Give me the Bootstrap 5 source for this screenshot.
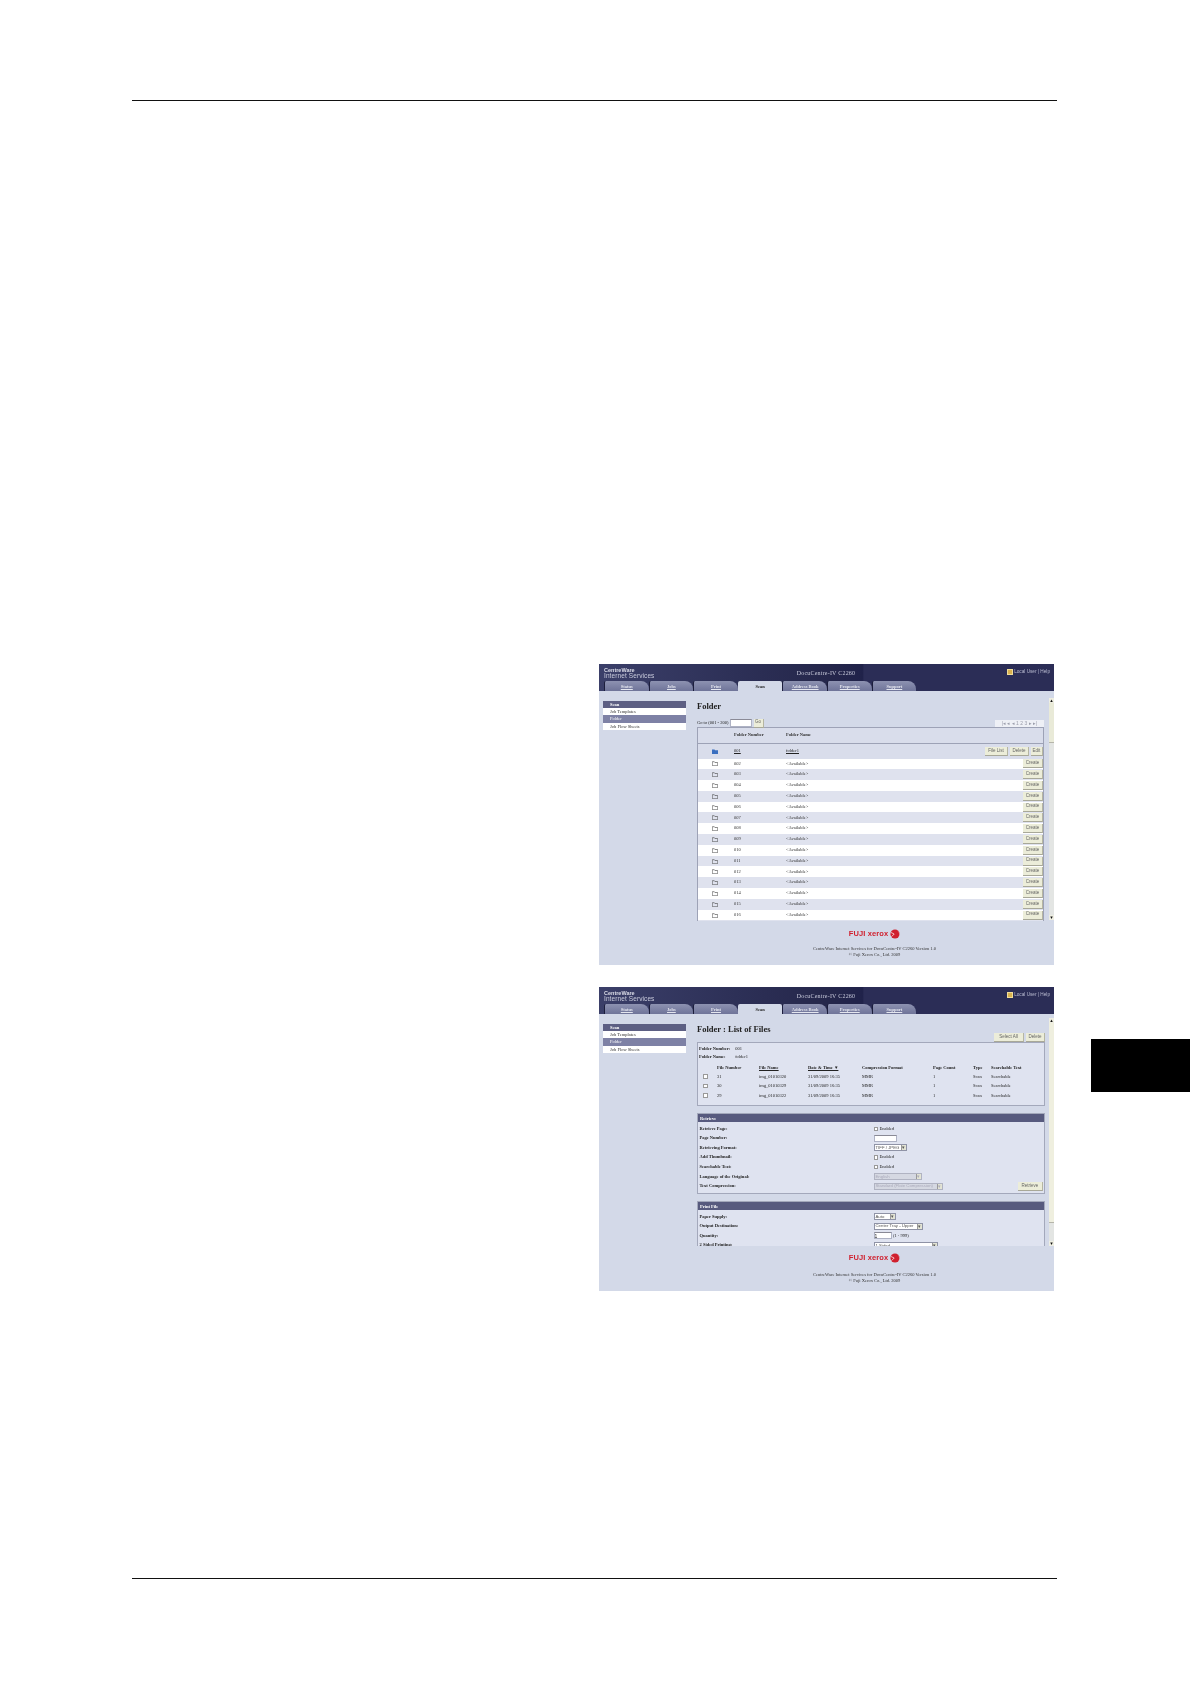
<!DOCTYPE html>
<html lang="en">
<head>
<meta charset="utf-8">
<title>Folder</title>
<link href="https://cdn.jsdelivr.net/npm/bootstrap@5.3.0/dist/css/bootstrap.min.css" rel="stylesheet">
<style>
html,body{margin:0;background:#fff}
.sheet{width:1190px;height:1684px;padding:100px 0 0 132px;overflow:hidden}
.mainc{width:925px;height:1479px;border-top:1.5px solid #111;border-bottom:1.5px solid #111;padding:563px 0 0 467px}
.thumbtab{width:99px;height:53px;margin:939px 0 0 34px;background:#000}
.shot{width:455px;font-family:"Liberation Serif",serif;font-size:4.5px;line-height:1;color:#222;background:#d3d9e8;filter:blur(.35px);overflow:hidden}
.shot1{height:301px}
.shot2{height:304px;margin-top:22px}
.mast{height:27px;background:linear-gradient(90deg,#3b3f69 0,#2d3057 30%,#25274b 50%,#20224a 58%,#2b2d56 58.2%,#2b2d56 100%);color:#e8e9f2;padding:0 4px 0 5px}
.mrow{height:17px}
.brandb{width:136px;flex:none}
.brand1{font:bold 5.5px/5px "Liberation Sans",sans-serif;margin-top:4px;color:#dcdde8}
.brand2{font:6.5px/6px "Liberation Sans",sans-serif;color:#c9cbdc;letter-spacing:.1px}
.model{font:6px/6px "Liberation Serif",serif;color:#c9cbdc;width:172px;margin-top:6px;letter-spacing:.2px;flex:none}
.who{font:4.7px/5px "Liberation Sans",sans-serif;color:#b9bbd0;margin-top:5px;margin-left:auto;gap:1px}
.who i{display:block;width:6px;height:6px;background:#d9b24f;border:1px solid #f0dd9a}
.nav-tabs.mtabs{height:10px;border:0;flex-wrap:nowrap;gap:0;margin-left:0}
.mtabs .nav-link{width:44.6px;height:10px;padding:2.5px 0 0;margin:0;border:0;border-left:1px solid #1c1e3c;border-radius:2px 8px 0 0;background:linear-gradient(#8d92b1,#6f7499);color:#e4e6ef;font:bold 4.5px/5px "Liberation Serif",serif;text-align:center;text-decoration:underline}
.mtabs .nav-link.active{background:#d3d9e8;color:#222;text-decoration:none;border:0;border-radius:2px 2px 0 0}
.mid{min-height:0}
.sidebar{width:98px;padding:10px 11px 0 4px;flex:none}
.list-group.snav{border-radius:0;width:83px;--bs-list-group-border-width:0}
.snav .list-group-item{height:7.2px;padding:1px 0 0 7px;font-size:4.5px;line-height:5px;border:0;border-radius:0;background:#fff;color:#333}
.snav .list-group-item.lead-i{background:#5d5f83;color:#fff;font-weight:700}
.snav .list-group-item.sel-i{background:#7e81a5;color:#fff}
.content{min-width:0;overflow:hidden;flex:1}
.c1{padding-top:10px;height:230px}
.c2{padding-top:10px;height:232px}
.ttl{font:bold 8.5px/11px "Liberation Serif",serif;color:#222;margin:0}
.goline{height:8px;margin-top:7px;width:347px}
.goin{margin:0 2px 0 1px}
.fld{display:inline-block;background:#fff;border:1px solid #aeb2c4;border-top-color:#8a8a96}
.fld1{width:22px;height:8px}
.pager{width:49px;height:7px;background:#eef0f6;font:5px/7px "Liberation Sans",sans-serif;color:#9a9caa;text-align:center}
.btn.pbtn{--bs-btn-padding-x:0;--bs-btn-padding-y:0;--bs-btn-font-size:4.5px;--bs-btn-border-radius:0;--bs-btn-line-height:1;height:9px;font-family:"Liberation Sans",sans-serif;color:#666;background:#ecedd9;border:0;border-right:1px solid #b5b5a2;border-bottom:1px solid #a8a898}
.w10{width:10px}.w20{width:20px}.w12{width:12px}.w19{width:19px}.w23{width:23px}.w30{width:30px}.w25{width:25px}
.tbox{width:347px;height:194px;border:1px solid #9da2b6;border-bottom:0;background:#dfe2ee;overflow:hidden}
.table.ftable{width:345px;margin:0;table-layout:fixed;font-size:4.5px;--bs-table-bg:transparent;--bs-table-color:#333;--bs-table-border-color:transparent}
.ftable td,.ftable th{padding:0;border:0;height:10.8px;vertical-align:middle;font-weight:400;background:transparent;box-shadow:none;line-height:1}
.ftable .colicon{width:36px}.ftable .colnum{width:52px}.ftable .colact{width:80px}
.ftable thead th{height:15.5px;font-weight:700;background:#d9ddeb;border-bottom:1px solid #9da2b6}
.ftable .firstr td{height:15px;background:#d9ddeb}
.ftable .wr td{background:#fff}
.ftable .gr td{background:#dfe2ee}
.ftable a{color:#222}
.ico{display:block;width:6px;height:5px;margin-left:14px}
.acts{gap:2px}
.scrollb{width:5px;flex:none;background:#e3e5e3;display:flex;flex-direction:column}
.scrollb::before,.scrollb::after{content:"▴";display:block;height:5px;flex:none;font:5px/5px "DejaVu Sans",sans-serif;color:#111;text-align:center;background:#eeeee2}
.scrollb::after{content:"▾";margin-top:auto}
.thumb1{height:40px;background:#e9ead8;border-bottom:1px solid #b5b5aa}
.thumb2{height:200px;background:#efefdf;border-bottom:1px solid #b5b5aa}
.sb1{height:222px;margin:7px 0 0 4px}
.sb2{height:228px;margin:4px 0 0 4px}
.foot{text-align:center;color:#333;font-size:4.5px;line-height:6px;padding-left:96px}
.foot1{height:44px;padding-top:7.5px}
.foot2{height:45px;padding-top:6px}
.fx{display:flex;justify-content:center;align-items:center;gap:2px;height:11px;margin-bottom:6.5px}
.foot2 .fx{margin-bottom:9px}
.fxt{font:bold 7.5px/10px "Liberation Sans",sans-serif;color:#d0202e;letter-spacing:.1px}
.fbtns{gap:2px;width:348px;margin-top:-2px;height:9px}
.lbox{width:348px;height:64px;border:1px solid #a3a8bb;background:#dfe3f0;padding-top:2px}
.inf{padding-left:1px;font-size:4.5px;height:8px;line-height:7px;white-space:nowrap}
.inf b{display:inline-block;width:35px}
.flist{width:346px;margin-top:3px;font-size:4.5px}
.frow{display:grid;grid-template-columns:19px 42px 49px 54px 71px 40px 18px 1fr;height:9.5px;align-items:center;white-space:nowrap}
.frow.fh{font-weight:700;height:8px}
.frow.fh .ul{text-decoration:underline}
.cb{display:inline-block;width:4.5px;height:4.5px;background:#fff;border:.6px solid #999;vertical-align:middle}
.frow .cb{margin-left:5px}
.card.sec{width:348px;border-radius:0;border:1px solid #a3a8bb;background:#dfe3f0;margin-top:7px;--bs-card-border-width:0}
.sec .card-header{height:8px;padding:1.5px 0 0 2px;border:0;border-radius:0;background:#575a7e;color:#fff;font-size:4.5px;line-height:5px;font-weight:700;flex:none}
.sec .card-body{padding:2px 0 0;flex:none}
.r1{height:81px}
.r2{height:60px}
.fr{display:flex;height:9.6px;align-items:center;padding-left:1.5px;font-weight:700;white-space:nowrap}
.fr .lbl{width:174px;flex:none}
.fr .val{font-weight:400;display:flex;align-items:center;gap:1.5px}
.pick{display:inline-flex;align-items:center;justify-content:space-between;height:7px;background:#fff;border:.6px solid #8f93a6;font:4.3px/6px "Liberation Sans",sans-serif;color:#555;padding-left:1px;white-space:nowrap}
.pick::after{content:"▾";display:block;flex:none;width:5px;height:100%;font-size:4.5px;line-height:5.5px;text-align:center;background:#e3e4d4;border-left:.5px solid #999}
.pick.off{background:#d5d8e2;color:#aab;border-color:#b0b3c2}
.w23p{width:23px;height:7px}
.w18p{width:18px;height:7px;font:5px/6px "Liberation Sans",sans-serif}
.pw22{width:22px}.pw33{width:33px}.pw48{width:48px}.pw49{width:49px}.pw64{width:64px}.pw69{width:69px}
.rbtn{margin-left:auto;margin-right:1px}
</style>
</head>
<body>
<div class="sheet d-flex">
  <div class="mainc flex-shrink-0">

    <section class="shot shot1 d-flex flex-column">
      <header class="mast d-flex flex-column flex-shrink-0">
        <div class="d-flex mrow">
          <div class="brandb"><div class="brand1">CentreWare</div><div class="brand2">Internet Services</div></div>
          <div class="model text-center">DocuCentre-IV C2260</div>
          <div class="who d-flex align-items-start"><i></i><span>Local User | Help</span></div>
        </div>
        <ul class="nav nav-tabs mtabs">
          <li class="nav-item"><a class="nav-link" href="#">Status</a></li>
          <li class="nav-item"><a class="nav-link" href="#">Jobs</a></li>
          <li class="nav-item"><a class="nav-link" href="#">Print</a></li>
          <li class="nav-item"><a class="nav-link active" href="#">Scan</a></li>
          <li class="nav-item"><a class="nav-link" href="#">Address Book</a></li>
          <li class="nav-item"><a class="nav-link" href="#">Properties</a></li>
          <li class="nav-item"><a class="nav-link" href="#">Support</a></li>
        </ul>
      </header>
      <div class="mid d-flex flex-shrink-0">
        <aside class="sidebar">
          <div class="list-group snav">
            <div class="list-group-item lead-i">Scan</div>
            <div class="list-group-item">Job Templates</div>
            <div class="list-group-item sel-i">Folder</div>
            <div class="list-group-item">Job Flow Sheets</div>
          </div>
        </aside>
        <main class="content c1">
          <h1 class="ttl">Folder</h1>
          <div class="goline d-flex align-items-center">
            <span>Go to (001 - 200)</span><span class="fld fld1 goin"></span>
            <button class="btn pbtn w10" type="button">Go</button>
            <span class="pager ms-auto">|◂ ◂ ◂ 1 2 3 ▸ ▸|</span>
          </div>
          <div class="tbox">
            <table class="table ftable">
              <thead><tr><th class="colicon"></th><th class="colnum">Folder Number</th><th>Folder Name</th><th class="colact"></th></tr></thead>
              <tbody id="rows1">
                <tr class="firstr"><td><svg class="ico" viewBox="0 0 6 5"><path d="M0 .5h2.5l.6.8H6V5H0z" fill="#3a6fc0"/></svg></td><td><a href="#">001</a></td><td><a href="#">folder1</a></td><td><div class="d-flex justify-content-end acts"><button class="btn pbtn w23" type="button">File List</button><button class="btn pbtn w19" type="button">Delete</button><button class="btn pbtn w12" type="button">Edit</button></div></td></tr>
              </tbody>
            </table>
          </div>
        </main>
        <div class="scrollb sb1"><div class="thumb1"></div></div>
      </div>
      <footer class="foot foot1 flex-shrink-0">
        <div class="fx"><span class="fxt">FUJI xerox</span><svg width="10" height="10" viewBox="0 0 10 10"><circle cx="5" cy="5" r="4.6" fill="#d0202e"/><path d="M6.5.8A4.6 4.6 0 0 1 8.4 8 5 5 0 0 0 6.5.8z" fill="#fff"/><path d="M1 3.5 4.2 5 1.6 7.6" fill="none" stroke="#fff" stroke-width=".7"/></svg></div>
        <div>CentreWare Internet Services for DocuCentre-IV C2260 Version 1.0</div>
        <div>© Fuji Xerox Co., Ltd. 2009</div>
      </footer>
    </section>

    <section class="shot shot2 d-flex flex-column">
      <header class="mast d-flex flex-column flex-shrink-0">
        <div class="d-flex mrow">
          <div class="brandb"><div class="brand1">CentreWare</div><div class="brand2">Internet Services</div></div>
          <div class="model text-center">DocuCentre-IV C2260</div>
          <div class="who d-flex align-items-start"><i></i><span>Local User | Help</span></div>
        </div>
        <ul class="nav nav-tabs mtabs">
          <li class="nav-item"><a class="nav-link" href="#">Status</a></li>
          <li class="nav-item"><a class="nav-link" href="#">Jobs</a></li>
          <li class="nav-item"><a class="nav-link" href="#">Print</a></li>
          <li class="nav-item"><a class="nav-link active" href="#">Scan</a></li>
          <li class="nav-item"><a class="nav-link" href="#">Address Book</a></li>
          <li class="nav-item"><a class="nav-link" href="#">Properties</a></li>
          <li class="nav-item"><a class="nav-link" href="#">Support</a></li>
        </ul>
      </header>
      <div class="mid d-flex flex-shrink-0">
        <aside class="sidebar">
          <div class="list-group snav">
            <div class="list-group-item lead-i">Scan</div>
            <div class="list-group-item">Job Templates</div>
            <div class="list-group-item sel-i">Folder</div>
            <div class="list-group-item">Job Flow Sheets</div>
          </div>
        </aside>
        <main class="content c2">
          <h1 class="ttl">Folder : List of Files</h1>
          <div class="fbtns d-flex justify-content-end"><button class="btn pbtn w30" type="button">Select All</button><button class="btn pbtn w19" type="button">Delete</button></div>
          <div class="lbox">
            <div class="inf"><b>Folder Number:</b> 001</div>
            <div class="inf"><b>Folder Name:</b> folder1</div>
            <div class="flist">
              <div class="frow fh"><span></span><span>File Number</span><span class="ul">File Name</span><span class="ul">Date &amp; Time ▼</span><span>Compression Format</span><span>Page Count</span><span>Type</span><span>Searchable Text</span></div>
              <div class="frow"><span><i class="cb"></i></span><span>31</span><span>img_01010320</span><span>31/09/2009 16:35</span><span>MMR</span><span>1</span><span>Scan</span><span>Searchable</span></div>
              <div class="frow"><span><i class="cb"></i></span><span>30</span><span>img_01010329</span><span>31/09/2009 16:35</span><span>MMR</span><span>1</span><span>Scan</span><span>Searchable</span></div>
              <div class="frow"><span><i class="cb"></i></span><span>29</span><span>img_01010322</span><span>31/09/2009 16:35</span><span>MMR</span><span>1</span><span>Scan</span><span>Searchable</span></div>
            </div>
          </div>
          <div class="card sec r1">
            <div class="card-header">Retrieve</div>
            <div class="card-body">
              <div class="fr"><span class="lbl">Retrieve Page:</span><span class="val"><i class="cb"></i>Enabled</span></div>
              <div class="fr"><span class="lbl">Page Number:</span><span class="val"><span class="fld w23p"></span></span></div>
              <div class="fr"><span class="lbl">Retrieving Format:</span><span class="val"><span class="pick pw33">TIFF / JPEG</span></span></div>
              <div class="fr"><span class="lbl">Add Thumbnail:</span><span class="val"><i class="cb"></i>Enabled</span></div>
              <div class="fr"><span class="lbl">Searchable Text:</span><span class="val"><i class="cb"></i>Enabled</span></div>
              <div class="fr"><span class="lbl">Language of the Original:</span><span class="val"><span class="pick off pw48">English</span></span></div>
              <div class="fr"><span class="lbl">Text Compression:</span><span class="val"><span class="pick off pw69">Standard (Flate Compression)</span></span><button class="btn pbtn w25 rbtn" type="button">Retrieve</button></div>
            </div>
          </div>
          <div class="card sec r2">
            <div class="card-header">Print File</div>
            <div class="card-body">
              <div class="fr"><span class="lbl">Paper Supply:</span><span class="val"><span class="pick pw22">Auto</span></span></div>
              <div class="fr"><span class="lbl">Output Destination:</span><span class="val"><span class="pick pw49">Center Tray - Upper</span></span></div>
              <div class="fr"><span class="lbl">Quantity:</span><span class="val"><span class="fld w18p">1</span>(1 - 999)</span></div>
              <div class="fr"><span class="lbl">2 Sided Printing:</span><span class="val"><span class="pick pw64">1 Sided</span></span></div>
            </div>
          </div>
        </main>
        <div class="scrollb sb2"><div class="thumb2"></div></div>
      </div>
      <footer class="foot foot2 flex-shrink-0">
        <div class="fx"><span class="fxt">FUJI xerox</span><svg width="10" height="10" viewBox="0 0 10 10"><circle cx="5" cy="5" r="4.6" fill="#d0202e"/><path d="M6.5.8A4.6 4.6 0 0 1 8.4 8 5 5 0 0 0 6.5.8z" fill="#fff"/><path d="M1 3.5 4.2 5 1.6 7.6" fill="none" stroke="#fff" stroke-width=".7"/></svg></div>
        <div>CentreWare Internet Services for DocuCentre-IV C2260 Version 1.0</div>
        <div>© Fuji Xerox Co., Ltd. 2009</div>
      </footer>
    </section>
  </div>
  <div class="thumbtab flex-shrink-0"></div>
</div>
<script>
var tb=document.getElementById('rows1'),h='';
for(var i=2;i<=16;i++){var n=('00'+i).slice(-3);
h+='<tr class="'+(i%2?'gr':'wr')+'"><td><svg class="ico" viewBox="0 0 6 5"><path d="M.3.7h2l.6.8h2.8v3.2H.3z" fill="none" stroke="#444" stroke-width=".6"/></svg></td><td>'+n+'</td><td>&lt;Available&gt;</td><td><div class="d-flex justify-content-end acts"><button class="btn pbtn w20" type="button">Create</button></div></td></tr>';}
tb.insertAdjacentHTML('beforeend',h);
</script>
<script src="https://cdn.jsdelivr.net/npm/bootstrap@5.3.0/dist/js/bootstrap.bundle.min.js"></script>
</body>
</html>
